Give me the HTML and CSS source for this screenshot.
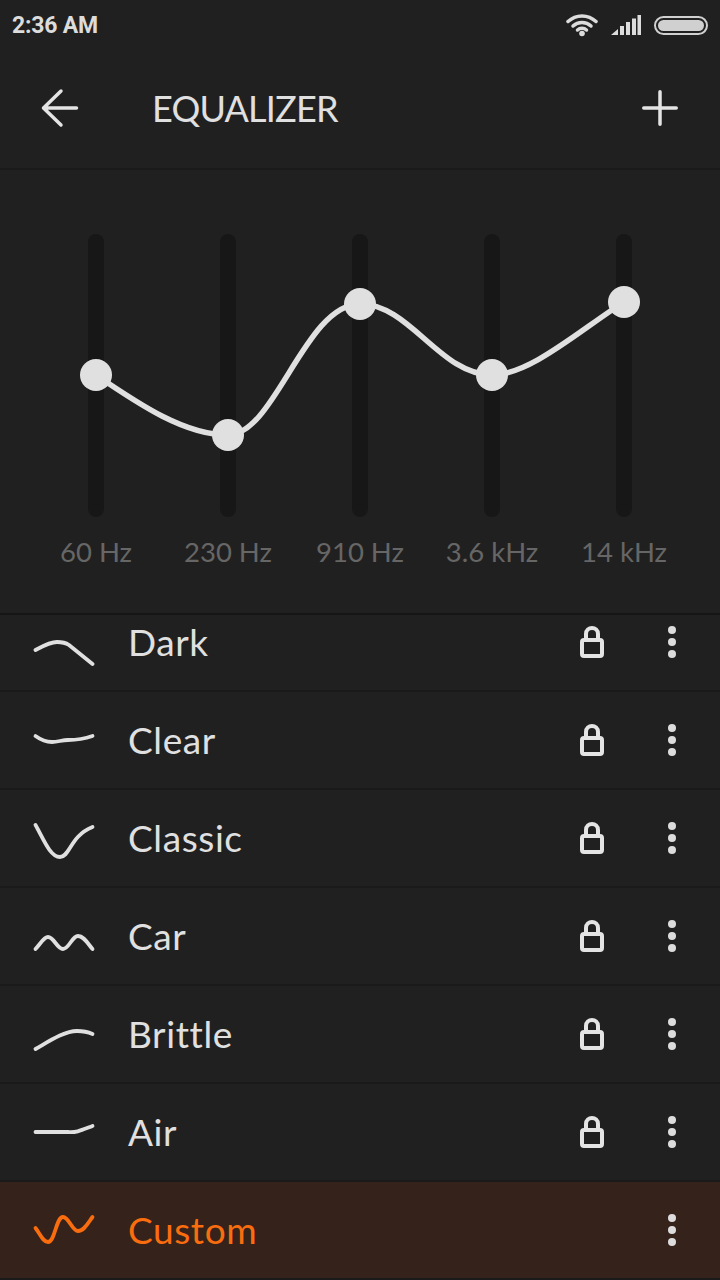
FILE: index.html
```html
<!DOCTYPE html>
<html lang="en">
<head>
<meta charset="utf-8">
<title>Equalizer</title>
<link rel="stylesheet" href="styles.css">
</head>
<body>
<div class="app">
  <header class="status">
    <span class="time">2:36 AM</span>
    <div class="status-icons">
      <svg class="ic-wifi" width="32" height="24" viewBox="0 0 32 24"><path class="wifi-arc" d="M2 8.5C10 1 22 1 30 8.5"/><path class="wifi-arc" d="M7 13C12 8.300 20 8.300 25 13"/><path class="wifi-arc" d="M11.500 17C14 14.800 18 14.800 20.500 17"/><circle class="fill" cx="16" cy="20.500" r="2.800"/></svg>
      <svg class="ic-signal" width="30" height="22" viewBox="0 0 30 22"><path class="fill" d="M0 21L7 15V21Z"/><rect class="fill" x="9" y="12" width="4" height="9"/><rect class="fill" x="15" y="8" width="4" height="13"/><rect class="fill" x="21" y="4.500" width="4" height="16.500"/><rect class="fill" x="26.500" y="1" width="3.500" height="20"/></svg>
      <div class="battery"><div class="battery-fill"></div></div>
    </div>
  </header>
  <nav class="toolbar">
    <svg class="tool-icon" width="40" height="40" viewBox="0 0 40 40"><path class="stroke-icon" d="M36.500 20H3.500M21 3L3.500 20L21 37"/></svg>
    <h1 class="title">EQUALIZER</h1>
    <svg class="tool-icon" width="40" height="40" viewBox="0 0 40 40"><path class="stroke-icon" d="M20 3.750V36.250M3.750 20H36.250"/></svg>
  </nav>
  <section class="eq">
    <svg class="eq-chart" width="720" height="348" viewBox="0 0 720 348">
      <g class="tracks">
        <rect x="88" y="64" width="16" height="283" rx="8"/>
        <rect x="220" y="64" width="16" height="283" rx="8"/>
        <rect x="352" y="64" width="16" height="283" rx="8"/>
        <rect x="484" y="64" width="16" height="283" rx="8"/>
        <rect x="616" y="64" width="16" height="283" rx="8"/>
      </g>
      <path class="curve" d="M96 205C140 235 185 265 228 265C275 265 305 134 360 134C410 134 440 205 492 205C530 205 580 160 624 132"/>
      <g class="knobs">
        <circle cx="96" cy="205" r="16"/>
        <circle cx="228" cy="265" r="16"/>
        <circle cx="360" cy="134" r="16"/>
        <circle cx="492" cy="205" r="16"/>
        <circle cx="624" cy="132" r="16"/>
      </g>
    </svg>
    <div class="bands">
      <span>60 Hz</span><span>230 Hz</span><span>910 Hz</span><span>3.6 kHz</span><span>14 kHz</span>
    </div>
  </section>
  <section class="presets">
    <ul class="preset-list">
      <li class="row">
        <svg class="curve-ic" width="64" height="48" viewBox="0 0 64 48"><path d="M3.500 32C11 28 18 24 25 24C31 24 34 25 37 27L60.500 46"/></svg>
        <span class="name">Dark</span>
        <svg class="lock" width="24" height="32" viewBox="0 0 24 32"><use href="#lock-shape"/></svg>
        <svg class="dots" width="8" height="32" viewBox="0 0 8 32"><use href="#dots-shape"/></svg>
      </li>
      <li class="row">
        <svg class="curve-ic" width="64" height="48" viewBox="0 0 64 48"><path d="M3.500 20C9 24 14 26 20 26C26 26 30 24 36 24C44 24 52 23 60.500 20"/></svg>
        <span class="name">Clear</span>
        <svg class="lock" width="24" height="32" viewBox="0 0 24 32"><use href="#lock-shape"/></svg>
        <svg class="dots" width="8" height="32" viewBox="0 0 8 32"><use href="#dots-shape"/></svg>
      </li>
      <li class="row">
        <svg class="curve-ic" width="64" height="48" viewBox="0 0 64 48"><path d="M3.500 11C11 24 18 43 28 43C38 43 38 22 60.500 13"/></svg>
        <span class="name">Classic</span>
        <svg class="lock" width="24" height="32" viewBox="0 0 24 32"><use href="#lock-shape"/></svg>
        <svg class="dots" width="8" height="32" viewBox="0 0 8 32"><use href="#dots-shape"/></svg>
      </li>
      <li class="row">
        <svg class="curve-ic" width="64" height="48" viewBox="0 0 64 48"><path d="M3.500 37C9 31 12 25 16 25C22 25 25 37 31 37C37 37 40 24 46 24C52 24 56 32 60.500 37"/></svg>
        <span class="name">Car</span>
        <svg class="lock" width="24" height="32" viewBox="0 0 24 32"><use href="#lock-shape"/></svg>
        <svg class="dots" width="8" height="32" viewBox="0 0 8 32"><use href="#dots-shape"/></svg>
      </li>
      <li class="row">
        <svg class="curve-ic" width="64" height="48" viewBox="0 0 64 48"><path d="M3.500 39C16 32 32 21 45 21C51 21 56 22 60.500 24"/></svg>
        <span class="name">Brittle</span>
        <svg class="lock" width="24" height="32" viewBox="0 0 24 32"><use href="#lock-shape"/></svg>
        <svg class="dots" width="8" height="32" viewBox="0 0 8 32"><use href="#dots-shape"/></svg>
      </li>
      <li class="row">
        <svg class="curve-ic" width="64" height="48" viewBox="0 0 64 48"><path d="M3.500 24L36 24C44 25 50 22 60.500 18"/></svg>
        <span class="name">Air</span>
        <svg class="lock" width="24" height="32" viewBox="0 0 24 32"><use href="#lock-shape"/></svg>
        <svg class="dots" width="8" height="32" viewBox="0 0 8 32"><use href="#dots-shape"/></svg>
      </li>
      <li class="row row-active">
        <svg class="curve-ic" width="64" height="48" viewBox="0 0 64 48"><path d="M3.500 22C8 28 11 36 16 36C23 36 24 11 31 11C37 11 40 25 46 25C52 25 56 17 60.500 11"/></svg>
        <span class="name">Custom</span>
        <svg class="dots" width="8" height="32" viewBox="0 0 8 32"><use href="#dots-shape"/></svg>
      </li>
    </ul>
  </section>
</div>
<svg class="defs" width="0" height="0">
  <defs>
    <g id="lock-shape">
      <path class="lock-line" d="M6 13V8C6 0 18 0 18 8V13"/>
      <rect class="lock-line" x="2" y="14" width="20" height="16" rx="2"/>
    </g>
    <g id="dots-shape">
      <circle class="fill" cx="4" cy="4" r="4"/>
      <circle class="fill" cx="4" cy="16" r="4"/>
      <circle class="fill" cx="4" cy="28" r="4"/>
    </g>
  </defs>
</svg>
</body>
</html>
```

FILE: styles.css
```css
* { box-sizing: border-box; }
html, body { margin: 0; padding: 0; background: #202020; }
body { font-family: "Lato", "Noto Sans", sans-serif; color: #e0e0e0; }
.app { width: 720px; height: 1280px; overflow: hidden; display: flex; flex-direction: column; background: #202020; }
.status { height: 50px; flex: none; display: flex; align-items: center; justify-content: space-between; padding: 0 12px; }
.time { font-family: "Roboto", sans-serif; font-weight: 700; font-size: 23px; letter-spacing: -0.2px; color: #dcdcdc; }
.status-icons { display: flex; align-items: center; gap: 13px; }
.fill { fill: #dcdcdc; }
.wifi-arc { fill: none; stroke: #dcdcdc; stroke-width: 3.500; stroke-linecap: round; }
.battery { width: 54px; height: 19px; border: 2px solid #d0d0d0; border-radius: 10px; padding: 2px; }
.battery-fill { width: 100%; height: 100%; background: #d0d0d0; border-radius: 6px; }
.toolbar { height: 120px; flex: none; display: flex; align-items: center; padding: 0 40px 2px; border-bottom: 2px solid #1a1a1a; }
.tool-icon { flex: none; }
.stroke-icon { fill: none; stroke: #e4e4e4; stroke-width: 3.500; stroke-linecap: round; stroke-linejoin: round; }
.title { flex: 1; margin: 0 0 0 72px; font-weight: 400; font-size: 36px; letter-spacing: -0.8px; color: #e0e0e0; }
.eq { height: 445px; flex: none; border-bottom: 2px solid #151515; }
.eq-chart { display: block; }
.tracks rect { fill: #171717; }
.curve { fill: none; stroke: #e0e0e0; stroke-width: 5.500; stroke-linecap: round; }
.knobs circle { fill: #e0e0e0; }
.bands { display: grid; grid-template-columns: repeat(5, 132px); padding: 16px 30px 0; text-align: center; font-size: 27.500px; line-height: 36px; color: #666; }
.presets { flex: 1; overflow: hidden; }
.preset-list { list-style: none; margin: -21px 0 0; padding: 0; }
.row { height: 98px; display: flex; align-items: center; padding: 0 44px 0 32px; border-bottom: 2px solid #1a1a1a; }
.curve-ic { flex: none; }
.curve-ic path { fill: none; stroke: #e0e0e0; stroke-width: 3.800; stroke-linecap: round; stroke-linejoin: round; }
.name { flex: 1; margin-left: 32px; padding-bottom: 2px; font-size: 37px; letter-spacing: 0.6px; color: #e0e0e0; }
.lock { flex: none; margin-right: 64px; }
.lock-line { fill: none; stroke: #e4e4e4; stroke-width: 4; }
.dots { flex: none; }
.row-active { background: #35231b; }
.row-active .name { color: #fa6d0f; }
.row-active .curve-ic path { stroke: #fa6d0f; }
.defs { position: absolute; }
```
